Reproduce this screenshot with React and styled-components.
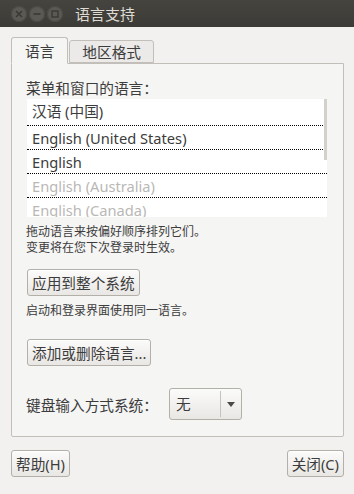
import React from "react";
import styled, { createGlobalStyle } from "styled-components";

const GlobalStyle = createGlobalStyle`
  html, body {
    margin: 0;
    padding: 0;
    background: #f2f1f0;
  }
  body {
    font-family: "Noto Sans", "Noto Sans CJK SC", sans-serif;
    color: #3c3c3c;
  }
`;

const languages = [
  { name: "汉语 (中国)", tall: true },
  { name: "English (United States)" },
  { name: "English" },
  { name: "English (Australia)", muted: true },
  { name: "English (Canada)", muted: true },
];

function App() {
  return (
    <>
      <GlobalStyle />
      <Window>
        <TitleBar>
          <WinButtons>
            <WinButton>
              <svg width="8" height="8" viewBox="0 0 8 8">
                <path d="M1 1L7 7M7 1L1 7" stroke="#3a3935" strokeWidth="1.6" />
              </svg>
            </WinButton>
            <WinButton>
              <svg width="8" height="8" viewBox="0 0 8 8">
                <path d="M0.5 4H7.5" stroke="#3a3935" strokeWidth="1.6" />
              </svg>
            </WinButton>
            <WinButton>
              <svg width="8" height="8" viewBox="0 0 8 8">
                <rect x="1" y="1" width="6" height="6" fill="none" stroke="#3a3935" strokeWidth="1.4" />
              </svg>
            </WinButton>
          </WinButtons>
          <Title>语言支持</Title>
        </TitleBar>

        <Body>
          <Tabs>
            <Tab $active>语言</Tab>
            <Tab>地区格式</Tab>
          </Tabs>
          <Panel>
            <SectionLabel>菜单和窗口的语言：</SectionLabel>
            <List>
              {languages.map((l) => (
                <Row key={l.name} $tall={l.tall} $muted={l.muted}>
                  {l.name}
                </Row>
              ))}
              <Thumb />
            </List>
            <Hint $mt={7}>
              拖动语言来按偏好顺序排列它们。
              <br />
              变更将在您下次登录时生效。
            </Hint>
            <Button $mt={13}>应用到整个系统</Button>
            <Hint $mt={7}>启动和登录界面使用同一语言。</Hint>
            <Button $mt={20}>添加或删除语言...</Button>
            <InputRow>
              <span>键盘输入方式系统：</span>
              <Combo>
                <ComboText>无</ComboText>
                <ComboArrow>
                  <svg width="8" height="5" viewBox="0 0 8 5">
                    <path d="M0 0H8L4 5Z" fill="#4a4a4a" />
                  </svg>
                </ComboArrow>
              </Combo>
            </InputRow>
          </Panel>
          <Footer>
            <Button>帮助(H)</Button>
            <Button>关闭(C)</Button>
          </Footer>
        </Body>
      </Window>
    </>
  );
}

const Window = styled.div`
  width: 354px;
  height: 494px;
  display: flex;
  flex-direction: column;
  background: #f2f1f0;
  overflow: hidden;
`;

const TitleBar = styled.div`
  height: 27px;
  display: flex;
  align-items: center;
  background: linear-gradient(#45443f, #3c3b37);
  padding-left: 11px;
  box-sizing: border-box;
`;

const WinButtons = styled.div`
  display: flex;
  gap: 2px;
`;

const WinButton = styled.div`
  width: 16px;
  height: 16px;
  border-radius: 50%;
  background: #5a5954;
  box-shadow: inset 0 0 0 1px #4a4944;
  display: flex;
  align-items: center;
  justify-content: center;
`;

const Title = styled.div`
  margin-left: 12px;
  color: #dfdbd2;
  font-size: 15px;
  line-height: 20px;
`;

const Body = styled.div`
  flex: 1;
  display: flex;
  flex-direction: column;
  padding: 11px 10px 0 11px;
`;

const Tabs = styled.div`
  display: flex;
  align-items: flex-end;
  gap: 1px;
  height: 26px;
  margin-bottom: -1px;
  position: relative;
  z-index: 1;
`;

const Tab = styled.div`
  box-sizing: border-box;
  height: ${(p) => (p.$active ? "27px" : "23px")};
  padding: 0 ${(p) => (p.$active ? "13px" : "12px")};
  margin-bottom: ${(p) => (p.$active ? "0" : "1px")};
  display: flex;
  align-items: center;
  font-size: 11pt;
  color: #3c3c3c;
  background: ${(p) => (p.$active ? "#f5f5f4" : "#ebeae8")};
  border: 1px solid #c2bfba;
  border-bottom-color: ${(p) => (p.$active ? "#f5f5f4" : "#c2bfba")};
  border-radius: 3px 3px 0 0;
`;

const Panel = styled.div`
  width: 333px;
  height: 374px;
  box-sizing: border-box;
  background: #f5f5f4;
  border: 1px solid #c2bfba;
  border-radius: 0 0 2px 2px;
  padding: 13px 14px 0 14px;
  display: flex;
  flex-direction: column;
  align-items: flex-start;
`;

const SectionLabel = styled.div`
  font-size: 11pt;
  line-height: 22px;
  height: 22px;
`;

const List = styled.div`
  position: relative;
  align-self: stretch;
  margin-left: 1px;
  margin-right: 2px;
  height: 118px;
  background: #fff;
  overflow: hidden;
`;

const Row = styled.div`
  box-sizing: border-box;
  height: ${(p) => (p.$tall ? "27px" : "24px")};
  padding: 0 5px ${(p) => (p.$tall ? "3px" : "0")};
  display: flex;
  align-items: center;
  font-size: 11pt;
  color: ${(p) => (p.$muted ? "#b9b8b6" : "#3c3c3c")};
  border-bottom: 1px dotted #000;
`;

const Thumb = styled.div`
  position: absolute;
  right: 0;
  top: 0;
  width: 3px;
  height: 61px;
  background: #d4d0cc;
`;

const Hint = styled.div`
  margin-top: ${(p) => (p.$mt ?? 5)}px;
  font-size: 12px;
  line-height: 16px;
`;

const Button = styled.button`
  margin-top: ${(p) => p.$mt ?? 0}px;
  height: 27px;
  padding: 0 4px;
  font-family: inherit;
  font-size: 11pt;
  color: #3c3c3c;
  background: linear-gradient(#fbfbfa, #e9e7e4);
  border: 1px solid #b3afa9;
  border-radius: 3px;
  box-shadow: inset 0 1px 0 #fff;
  margin-left: 1px;
`;

const InputRow = styled.div`
  margin-top: 22px;
  display: flex;
  align-items: center;
  gap: 11px;
  font-size: 11pt;
`;

const Combo = styled.div`
  width: 73px;
  height: 32px;
  box-sizing: border-box;
  display: flex;
  align-items: center;
  background: linear-gradient(#fbfbfa, #e9e7e4);
  border: 1px solid #b3afa9;
  border-radius: 3px;
`;

const ComboText = styled.div`
  width: 51px;
  padding-left: 6px;
  box-sizing: border-box;
  font-size: 11pt;
  line-height: 26px;
  border-right: 1px solid #c6c2bd;
`;

const ComboArrow = styled.div`
  flex: 1;
  display: flex;
  justify-content: center;
`;

const Footer = styled.div`
  display: flex;
  justify-content: space-between;
  margin-top: 13px;
  margin-left: -1px;
`;

export default App;
